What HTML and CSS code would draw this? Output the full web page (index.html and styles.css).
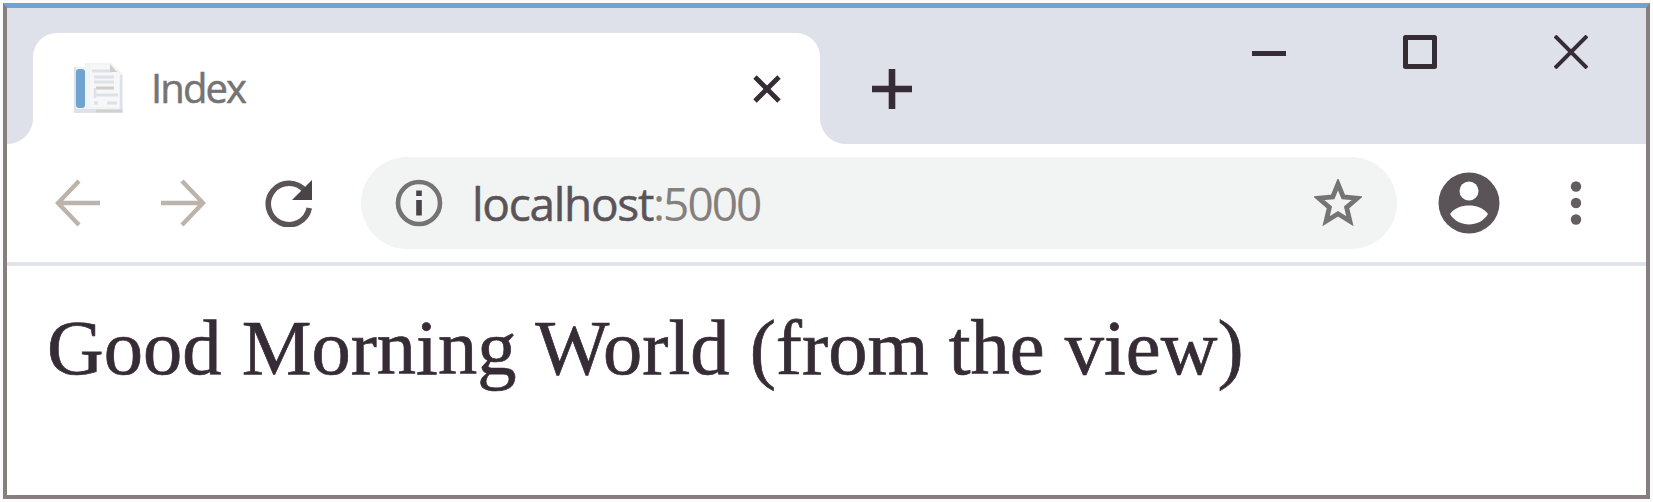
FILE: index.html
```html
<!DOCTYPE html>
<html lang="en">
<head>
<meta charset="utf-8">
<title>Index</title>
<link rel="stylesheet" href="styles.css">
</head>
<body>
<div class="window">
  <header class="strip">
    <div class="tab">
      <svg class="favicon" width="54" height="54" viewBox="0 0 54 54">
        <path d="M2 5h11V1h26l12 11v39H2z" fill="#f2f4f4"/>
        <path d="M2 47h49v4H2zM2 5h2v45H2z" fill="#dee1e9"/>
        <rect x="4" y="7" width="9" height="39" rx="3" fill="#70a3d0"/>
        <path d="M18 3h20l12 11v31H18z" fill="#f6f7f8"/>
        <path d="M20 9h20M22 15h20M22 20h20M22 33h24M22 41h4M35 41h10" stroke="#dee1e9" stroke-width="3"/>
        <path d="M24 26h18" stroke="#d2cdc6" stroke-width="3"/>
        <path d="M38 2v8h7z" fill="#d2cdc6"/>
        <path d="M49 13v34M23 26v10" stroke="#dee1e9" stroke-width="2.5"/>
        <path d="M24 49h26" stroke="#d2cfcc" stroke-width="2.5"/>
      </svg>
      <span class="title">Index</span>
      <svg class="close" width="30" height="30" viewBox="0 0 30 30"><path d="M3 3l24 24M27 3L3 27" stroke="#362c36" stroke-width="4.8"/></svg>
    </div>
    <svg class="plus" width="40" height="40" viewBox="0 0 40 40"><path d="M0 20h40M20 0v40" stroke="#362c36" stroke-width="6.6"/></svg>
    <div class="controls">
      <svg width="34" height="34" viewBox="0 0 34 34"><path d="M0 18.500h34" stroke="#362c36" stroke-width="5"/></svg>
      <svg width="34" height="34" viewBox="0 0 34 34"><path d="M2.5 2.5h29v29h-29z" fill="none" stroke="#362c36" stroke-width="5" stroke-linejoin="round"/></svg>
      <svg width="34" height="34" viewBox="0 0 34 34"><path d="M1 1l32 32M33 1L1 33" stroke="#362c36" stroke-width="4"/></svg>
    </div>
  </header>
  <nav class="toolbar">
    <svg class="back" width="46" height="48" viewBox="0 0 46 48"><path d="M45 24H4M24 2L3 24l21 22" fill="none" stroke="#bcb4ab" stroke-width="4.4"/></svg>
    <svg class="forward" width="46" height="48" viewBox="0 0 46 48"><path d="M1 24h41M22 2l21 22-21 22" fill="none" stroke="#bcb4ab" stroke-width="4.4"/></svg>
    <svg class="reload" width="48" height="48" viewBox="0 0 48 48"><path d="M40.500 12.500A20.700 20.700 0 1 0 44.300 29" fill="none" stroke="#5a5459" stroke-width="5.600"/><path d="M47 1v20H27z" fill="#4a434a"/></svg>
    <div class="address">
      <svg class="info" width="48" height="48" viewBox="0 0 48 48"><circle cx="24" cy="24" r="21" fill="none" stroke="#757374" stroke-width="4.600"/><path d="M24 21v15.500M24 11.500v5.500" stroke="#4a434a" stroke-width="5.600"/></svg>
      <span class="host">localhost</span><span class="port">:5000</span>
      <svg class="star" width="48" height="48" viewBox="0 0 48 48"><path d="M24 5l5.300 13 14 1.200-10.700 9.200 3.300 13.800L24 34.800 12.100 42.200l3.300-13.800L4.700 19.200l14-1.200z" fill="none" stroke="#757374" stroke-width="4.800"/></svg>
    </div>
    <svg class="person" width="62" height="62" viewBox="0 0 62 62"><circle cx="31" cy="31" r="30.500" fill="#5a5459"/><circle cx="31" cy="19" r="9.500" fill="#fff"/><path d="M12 42c4-6 12-8.500 19-8.500S46 36 50 42c-4 7-12 10.500-19 10.500S16 49 12 42z" fill="#fff"/></svg>
    <svg class="dots" width="12" height="46" viewBox="0 0 12 46" fill="#645e62"><circle cx="6" cy="6.500" r="5.200"/><circle cx="6" cy="23" r="5.200"/><circle cx="6" cy="39.500" r="5.200"/></svg>
  </nav>
  <main class="view">Good Morning World (from the view)</main>
</div>
</body>
</html>
```
FILE: styles.css
```css
* { box-sizing: border-box; }
body { margin: 0; height: 502px; padding: 3px 3px 3px 3px; background: #fbfbfb; overflow: hidden; }
svg { display: block; flex: none; }
.window {
  width: 1647px; height: 496px; background: #fff;
  border: 4px solid #85807d; border-top: 5px solid #70a3d0;
  display: flex; flex-direction: column;
}
.strip { height: 136px; flex: none; display: flex; padding: 25px 0 0 26px; background: #dee1e9; }
.tab {
  position: relative; width: 787px; height: 111px; flex: none; background: #fff;
  border-radius: 24px 24px 0 0; display: flex; align-items: center; padding: 0 38px 0 39px;
}
.tab::before, .tab::after {
  content: ""; position: absolute; bottom: 0; width: 26px; height: 26px;
}
.tab::before { left: -26px; background: radial-gradient(circle at 0 0, transparent 25.500px, #fff 26.500px); }
.tab::after { right: -26px; background: radial-gradient(circle at 100% 0, transparent 25.500px, #fff 26.500px); }
.title {
  margin: -2px 0 0 25px; font: 40px/48px "Open Sans", sans-serif; letter-spacing: -1.900px;
  color: #757374; -webkit-text-stroke: 0.500px #757374;
}
.close { margin-left: auto; }
.plus { margin: 36px 0 0 52px; }
.controls { margin: 2px 58px 0 auto; display: flex; gap: 117px; }
.toolbar {
  height: 122px; flex: none; display: flex; align-items: center;
  padding: 0 64px 0 48px; border-bottom: 4px solid #e0e3e9;
}
.forward { margin-left: 59px; }
.reload { margin-left: 59px; }
.address {
  width: 1036px; height: 92px; margin-left: 48px; padding: 0 35px 0 34px;
  display: flex; align-items: center; border-radius: 46px; background: #f2f4f4;
  font: 46px/60px "Open Sans", sans-serif;
}
.host { margin-left: 29px; color: #5a5459; letter-spacing: -1.300px; -webkit-text-stroke: 0.500px #5a5459; }
.port { color: #85807d; letter-spacing: -2px; }
.star { margin-left: auto; }
.person { margin-left: 41px; }
.dots { margin-left: auto; }
.view {
  padding: 37px 0 0 40px; font: 78.500px/90px "Liberation Serif", serif; word-spacing: 0.600px;
  color: #362c36; -webkit-text-stroke: 0.700px #362c36; white-space: nowrap;
}
```
